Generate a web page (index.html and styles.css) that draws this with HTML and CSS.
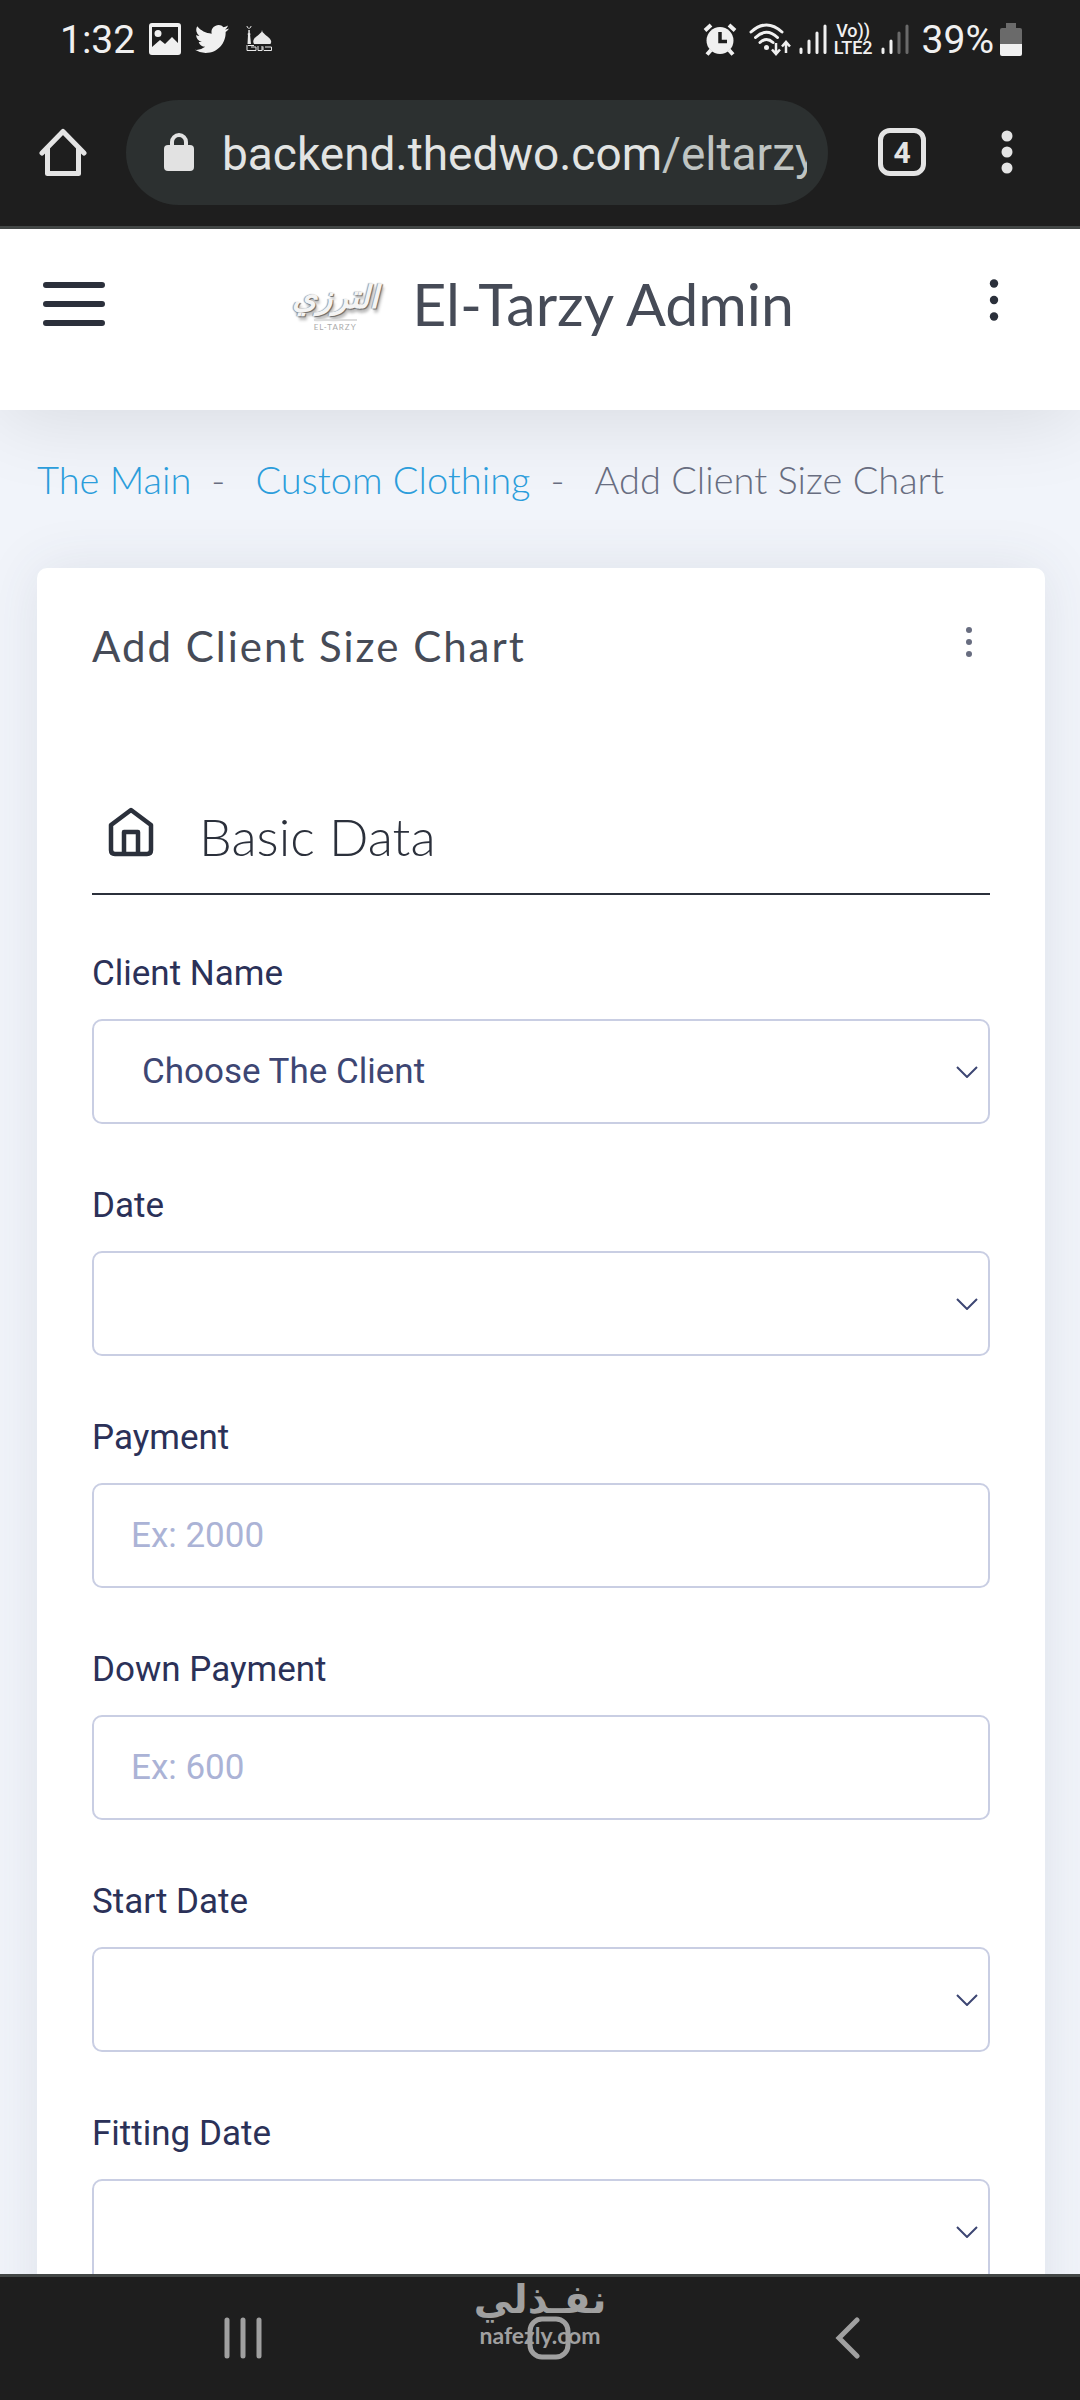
FILE: index.html
```html
<!DOCTYPE html>
<html lang="en">
<head>
  <meta charset="UTF-8">
  <meta name="viewport" content="width=device-width, initial-scale=1">
  <title>El-Tarzy Admin</title>
  <link rel="stylesheet" href="styles.css">
</head>
<body>
  <!-- Status bar -->
  <div class="status-bar">
    <div class="status-left">
      <span class="status-text">1:32</span>
      <svg class="icon-picture" width="32" height="32" viewBox="0 0 32 32">
        <path fill="#f0f0f0" fill-rule="evenodd" d="M3 0h26a3 3 0 0 1 3 3v26a3 3 0 0 1-3 3H3a3 3 0 0 1-3-3V3a3 3 0 0 1 3-3zM3 4v20l8-7 5 4 7-7 6 6V4zM9 7a3.500 3.500 0 1 1 0 7 3.500 3.500 0 0 1 0-7z"/>
      </svg>
      <svg class="icon-bird" width="36" height="30" viewBox="0 1.500 24 21">
        <path fill="#f0f0f0" d="M23.950 4.570a10 10 0 0 1-2.820.770 4.960 4.960 0 0 0 2.160-2.720c-.950.550-2 .950-3.130 1.190a4.920 4.920 0 0 0-8.380 4.480C7.690 8.090 4.070 6.130 1.640 3.160a4.920 4.920 0 0 0 1.520 6.570 4.900 4.900 0 0 1-2.230-.610v.060c0 2.380 1.700 4.370 3.950 4.820a5 5 0 0 1-2.210.090 4.940 4.940 0 0 0 4.600 3.420A9.870 9.870 0 0 1 0 19.540a14 14 0 0 0 7.550 2.210c9.050 0 14-7.500 14-13.980 0-.210 0-.420-.020-.630a9.940 9.940 0 0 0 2.420-2.570z"/>
      </svg>
      <svg class="icon-mosque" width="26" height="26" viewBox="0 0 26 26">
        <path fill="#e8e8e8" d="M8 18c-1-2-1-3 0-5 1-2 4-3 7.500-7l.5-2 .5 2C20 10 23 11 24 13c1.500 2 1.500 3 .5 5zM1.500 18l.5-9-.5-1 .8-1V4h1.500v3l.8 1-.5 1 .9 9z"/>
        <path fill="none" stroke="#e8e8e8" d="M1 0c0 3 4 3 4 0M1 19v5.500h9V21H5M12 20v4.500h4V20M18 24.500h7.500V21H19M2 19.500h6M17 20.500v4"/>
      </svg>
    </div>
    <div class="status-right">
      <svg class="icon-alarm" width="34" height="33" viewBox="0 0 34 33">
        <circle cx="17" cy="17.500" r="13.500" fill="#f0f0f0"/>
        <path fill="none" stroke="#f0f0f0" stroke-width="4" d="M2 7.500 8 2M32 7.500 26 2M8 27l-4 4.500M26 27l4 4.500"/>
        <path fill="none" stroke="#1e1e1e" stroke-width="3.500" d="M17 9v9.500h7"/>
      </svg>
      <svg class="icon-wifi" width="42" height="33" viewBox="0 0 42 33">
        <g fill="none" stroke="#f0f0f0" stroke-width="3" stroke-linecap="round">
          <path d="M2 9Q17.500-5 33 9M6.500 14.500Q17.500 4 28.500 14.500M11 19.500q6.500-6 13 0"/>
        </g>
        <circle cx="17.500" cy="24.500" r="2.500" fill="#f0f0f0"/>
        <path fill="none" stroke="#f0f0f0" stroke-width="2.500" d="M27 20v11M23 26.500l4 4.500 4-4.500M37 30V19M33 23.500l4-4.500 4 4.500"/>
      </svg>
      <svg class="icon-signal" width="28" height="30" viewBox="0 0 28 30">
        <path stroke="#f0f0f0" stroke-width="3" stroke-linecap="round" d="M2 25v3.500M10 17v11.500M18 9v19.500M26 2v26.500"/>
      </svg>
      <span class="volte"><span>Vo))</span><span>LTE2</span></span>
      <svg class="icon-signal" width="28" height="30" viewBox="0 0 28 30">
        <path stroke="#f0f0f0" stroke-width="3" stroke-linecap="round" d="M2 25v3.500M10 17v11.500"/>
        <path stroke="#6a6a6a" stroke-width="3" stroke-linecap="round" d="M18 9v19.500M26 2v26.500"/>
      </svg>
      <span class="status-text battery-text">39%</span>
      <svg width="22" height="33" viewBox="0 0 22 33">
        <path fill="#6a6a6a" d="M6 0h10v5h4q2 0 2 2v14H0V7q0-2 2-2h4z"/>
        <path fill="#f0f0f0" d="M0 21h22v10q0 2-2 2H2q-2 0-2-2z"/>
      </svg>
    </div>
  </div>

  <!-- Browser toolbar -->
  <div class="toolbar">
    <button class="icon-btn" aria-label="Home">
      <svg width="48" height="48" viewBox="0 0 48 48">
        <path fill="none" stroke="#e4e4e4" stroke-width="5" stroke-linejoin="round" stroke-linecap="round" d="M3 25 24 3.500 45 25M8.500 21v24.500h31V21"/>
      </svg>
    </button>
    <div class="url-pill">
      <svg class="lock" width="30" height="38" viewBox="0 0 30 38">
        <rect y="12" width="30" height="26" rx="4" fill="#e2e2e2"/>
        <path fill="none" stroke="#e2e2e2" stroke-width="4" d="M8 14V9a7 7 0 0 1 14 0v5"/>
      </svg>
      <div class="url">backend.thedwo.com<span>/eltarzy</span></div>
    </div>
    <button class="tabs" aria-label="Open tabs">4</button>
    <button class="icon-btn" aria-label="Browser menu">
      <svg width="12" height="44" viewBox="0 0 12 44" fill="#e4e4e4">
        <circle cx="6" cy="6" r="5.500"/><circle cx="6" cy="22" r="5.500"/><circle cx="6" cy="38" r="5.500"/>
      </svg>
    </button>
  </div>

  <!-- Page -->
  <div class="page">
    <header class="header">
      <button class="icon-btn" aria-label="Toggle menu">
        <svg width="62" height="44" viewBox="0 0 62 44">
          <path stroke="#2b303b" stroke-width="6" stroke-linecap="round" d="M3 3h56M3 22h56M3 41h56"/>
        </svg>
      </button>
      <a class="brand" href="#">
        <span class="brand-logo">
          <span class="brand-ar" lang="ar">الترزي</span>
          <span class="brand-en">EL-TARZY</span>
        </span>
        <span class="brand-name">El-Tarzy Admin</span>
      </a>
      <button class="icon-btn more" aria-label="More">
        <svg width="10" height="42" viewBox="0 0 10 42" fill="#2b303b">
          <circle cx="5" cy="4.500" r="4.200"/><circle cx="5" cy="21" r="4.200"/><circle cx="5" cy="37.500" r="4.200"/>
        </svg>
      </button>
    </header>

    <nav class="breadcrumb">
      <a href="#">The Main</a>
      <span class="sep">-</span>
      <a href="#">Custom Clothing</a>
      <span class="sep">-</span>
      <span>Add Client Size Chart</span>
    </nav>

    <main class="card">
      <div class="card-head">
        <h1>Add Client Size Chart</h1>
        <button class="icon-btn more" aria-label="Card options">
          <svg width="8" height="32" viewBox="0 0 8 32" fill="#686d80">
            <circle cx="4" cy="4" r="3"/><circle cx="4" cy="16" r="3"/><circle cx="4" cy="28" r="3"/>
          </svg>
        </button>
      </div>

      <div class="section-title">
        <svg width="46" height="50" viewBox="0 0 46 50">
          <g fill="none" stroke="#2b303b" stroke-width="4.500" stroke-linejoin="round">
            <path d="M23 3 43 18v25q0 4-4 4H7q-4 0-4-4V18z"/>
            <path d="M16 47V25h14v22"/>
          </g>
        </svg>
        <h2>Basic Data</h2>
      </div>

      <form class="form">
        <div class="field">
          <label for="client">Client Name</label>
          <div class="select">
            <select id="client"><option>Choose The Client</option></select>
            <svg width="22" height="12" viewBox="0 0 22 12"><path fill="none" stroke="#3d4673" stroke-width="2" d="M1 1l10 10L21 1"/></svg>
          </div>
        </div>
        <div class="field">
          <label for="date">Date</label>
          <div class="select">
            <select id="date"><option></option></select>
            <svg width="22" height="12" viewBox="0 0 22 12"><path fill="none" stroke="#3d4673" stroke-width="2" d="M1 1l10 10L21 1"/></svg>
          </div>
        </div>
        <div class="field">
          <label for="payment">Payment</label>
          <input id="payment" type="text" placeholder="Ex: 2000">
        </div>
        <div class="field">
          <label for="down">Down Payment</label>
          <input id="down" type="text" placeholder="Ex: 600">
        </div>
        <div class="field">
          <label for="start">Start Date</label>
          <div class="select">
            <select id="start"><option></option></select>
            <svg width="22" height="12" viewBox="0 0 22 12"><path fill="none" stroke="#3d4673" stroke-width="2" d="M1 1l10 10L21 1"/></svg>
          </div>
        </div>
        <div class="field">
          <label for="fitting">Fitting Date</label>
          <div class="select">
            <select id="fitting"><option></option></select>
            <svg width="22" height="12" viewBox="0 0 22 12"><path fill="none" stroke="#3d4673" stroke-width="2" d="M1 1l10 10L21 1"/></svg>
          </div>
        </div>
      </form>
    </main>
  </div>

  <!-- Phone navigation -->
  <div class="nav-bar">
    <button class="icon-btn" aria-label="Recent apps">
      <svg width="38" height="42" viewBox="0 0 38 42">
        <path stroke="#a0a0a0" stroke-width="5" stroke-linecap="round" d="M3 3v36M19 3v36M35 3v36"/>
      </svg>
    </button>
    <button class="icon-btn" aria-label="Home screen">
      <svg width="44" height="44" viewBox="0 0 44 44">
        <rect x="3" y="3" width="38" height="38" rx="12" fill="none" stroke="#a0a0a0" stroke-width="5"/>
      </svg>
    </button>
    <button class="icon-btn" aria-label="Back">
      <svg width="26" height="42" viewBox="0 0 26 42">
        <path fill="none" stroke="#a0a0a0" stroke-width="5" stroke-linecap="round" d="M22 3 4 21l18 18"/>
      </svg>
    </button>
    <div class="watermark">
      <span class="watermark-ar" lang="ar">نفـذلي</span>
      <span class="watermark-en">nafezly.com</span>
    </div>
  </div>
</body>
</html>
```
FILE: styles.css
```css
* {
  box-sizing: border-box;
}

body {
  margin: 0;
  height: 100vh;
  display: flex;
  flex-direction: column;
  background: #f1f4fa;
  font-family: Lato, sans-serif;
  color: #464b57;
}

svg {
  display: block;
  flex: none;
}

a {
  color: #2b9ddb;
  text-decoration: none;
}

h1, h2 {
  margin: 0;
}

.icon-btn {
  display: flex;
  padding: 0;
  border: none;
  background: none;
  cursor: pointer;
}

/* status bar */
.status-bar {
  flex: none;
  display: flex;
  justify-content: space-between;
  height: 78px;
  padding: 0 58px 0 60px;
  background: #1e1e1e;
  color: #f0f0f0;
  font-family: Roboto, sans-serif;
}

.status-left,
.status-right {
  display: flex;
  align-items: center;
}

.status-text {
  padding-top: 2px;
  font-size: 39px;
  line-height: 48px;
}

.icon-picture {
  margin-left: 14px;
}

.icon-bird {
  margin-left: 13px;
}

.icon-mosque {
  margin-left: 16px;
}

.icon-wifi {
  margin-left: 12px;
}

.icon-signal {
  margin-left: 8px;
}

.volte {
  display: flex;
  flex-direction: column;
  align-items: center;
  margin-left: 7px;
  font-size: 18px;
  font-weight: 500;
  line-height: 17px;
}

.battery-text {
  margin: 0 6px 0 13px;
}

/* browser toolbar */
.toolbar {
  flex: none;
  display: flex;
  align-items: center;
  height: 151px;
  padding: 0 67px 0 39px;
  background: #1e1e1e;
  border-bottom: 3px solid #434746;
  font-family: Roboto, sans-serif;
}

.url-pill {
  flex: 1;
  min-width: 0;
  display: flex;
  align-items: center;
  gap: 28px;
  height: 105px;
  margin: 0 50px 0 39px;
  padding: 0 21px 0 38px;
  border-radius: 53px;
  background: #2c3030;
}

.url {
  overflow: hidden;
  padding-top: 4px;
  white-space: nowrap;
  font-size: 46px;
  line-height: 60px;
  color: #e2e4e3;
}

.url span {
  color: #bfc4c2;
}

.tabs {
  width: 48px;
  height: 48px;
  margin-right: 75px;
  padding: 0;
  border: 5px solid #e4e4e4;
  border-radius: 12px;
  background: none;
  color: #e4e4e4;
  font: bold 30px Roboto, sans-serif;
}

/* page */
.page {
  flex: 1;
  min-height: 0;
  overflow-y: auto;
  scrollbar-width: none;
}

.header {
  display: flex;
  align-items: center;
  justify-content: space-between;
  height: 181px;
  padding: 0 81px 32px 43px;
  background: #fff;
  box-shadow: 0 10px 80px rgba(0, 0, 0, 0.1);
}

.more {
  padding-bottom: 8px;
}

.brand {
  display: flex;
  align-items: center;
  gap: 30px;
  margin-right: 12px;
  color: #464b57;
}

.brand-logo {
  display: flex;
  flex-direction: column;
  align-items: center;
  width: 94px;
}

.brand-ar {
  font: italic bold 32px "DejaVu Sans", sans-serif;
  line-height: 44px;
  color: #f4f4f4;
  text-shadow: 1px 1px 1px #666, -1px 0 1px #999, 2px 4px 3px #bbb;
}

.brand-en {
  font-size: 8px;
  line-height: 12px;
  letter-spacing: 1px;
  color: #aaa;
  border-top: 2px solid #ddd;
}

.brand-name {
  font-size: 59px;
  line-height: 72px;
}

.breadcrumb {
  display: flex;
  padding: 45px 37px 0;
  font-size: 38px;
  font-weight: 300;
  line-height: 48px;
  color: #686d80;
}

.sep {
  margin: 0 30px 0 20px;
}

.card {
  margin: 65px 35px 0 37px;
  padding: 54px 55px 60px;
  background: #fff;
  border-radius: 10px;
  box-shadow: 0 0 56px rgba(60, 70, 90, 0.1);
}

.card-head {
  display: flex;
  align-items: center;
  justify-content: space-between;
  padding-right: 17px;
}

h1 {
  font-size: 42px;
  font-weight: 400;
  line-height: 48px;
  letter-spacing: 2px;
}

.section-title {
  display: flex;
  align-items: center;
  gap: 45px;
  margin-top: 130px;
  padding: 0 0 29px 16px;
  border-bottom: 2px solid #2b303b;
  color: #2b303b;
}

h2 {
  padding-top: 8px;
  font-size: 52px;
  font-weight: 300;
  line-height: 56px;
}

.form {
  display: flex;
  flex-direction: column;
  gap: 61px;
  margin-top: 58px;
  font-family: Roboto, sans-serif;
}

.field {
  display: flex;
  flex-direction: column;
  gap: 24px;
}

label {
  font-size: 35px;
  line-height: 42px;
  color: #2b3158;
}

.select {
  display: grid;
  align-items: center;
}

.select > * {
  grid-area: 1 / 1;
}

.select svg {
  justify-self: end;
  margin-right: 12px;
  pointer-events: none;
}

select,
input {
  width: 100%;
  height: 105px;
  padding: 0 37px;
  border: 2px solid #c9cee3;
  border-radius: 10px;
  background: #fff;
  color: #3d4673;
  font: 35px Roboto, sans-serif;
  appearance: none;
}

select {
  padding-left: 48px;
}

input::placeholder {
  color: #abb3d6;
}

/* phone navigation */
.nav-bar {
  position: relative;
  flex: none;
  display: flex;
  align-items: center;
  justify-content: space-between;
  height: 126px;
  padding: 0 219px 2px 224px;
  background: #1e1e1e;
  border-top: 3px solid #434746;
}

.watermark {
  position: absolute;
  top: 0;
  left: 50%;
  transform: translateX(-50%);
  display: flex;
  flex-direction: column;
  align-items: center;
  color: #a0a0a0;
}

.watermark-ar {
  font: bold 39px "DejaVu Sans", sans-serif;
  line-height: 46px;
}

.watermark-en {
  font-size: 23px;
  font-weight: 700;
  line-height: 24px;
}
```
